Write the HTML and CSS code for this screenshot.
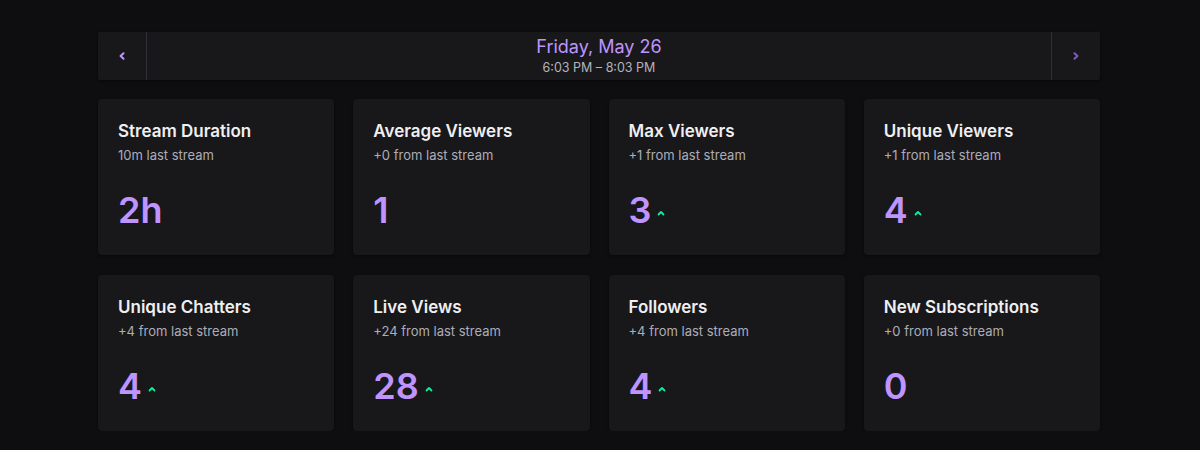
FILE: index.html
```html
<!DOCTYPE html>
<html lang="en">
<head>
<meta charset="utf-8">
<link rel="stylesheet" href="styles.css">
</head>
<body>
<div class="page">
  <div class="nav">
    <button class="nav-btn prev" aria-label="Previous">
      <svg width="8" height="8" viewBox="0 0 8 8"><path d="M5.5 1.2 L2.6 4 L5.5 6.8" fill="none" stroke="currentColor" stroke-width="2" stroke-linecap="round" stroke-linejoin="round"/></svg>
    </button>
    <div class="nav-center">
      <div class="nav-date">Friday, May 26</div>
      <div class="nav-time">6:03 PM – 8:03 PM</div>
    </div>
    <button class="nav-btn next" aria-label="Next">
      <svg width="8" height="8" viewBox="0 0 8 8"><path d="M2.5 1.2 L5.4 4 L2.5 6.8" fill="none" stroke="currentColor" stroke-width="2" stroke-linecap="round" stroke-linejoin="round"/></svg>
    </button>
  </div>

  <div class="grid">
    <div class="card">
      <div class="title">Stream Duration</div>
      <div class="sub">10m last stream</div>
      <div class="value">2h</div>
    </div>
    <div class="card">
      <div class="title">Average Viewers</div>
      <div class="sub">+0 from last stream</div>
      <div class="value">1</div>
    </div>
    <div class="card">
      <div class="title">Max Viewers</div>
      <div class="sub">+1 from last stream</div>
      <div class="value">3<svg class="up" width="8" height="6" viewBox="0 0 8 6"><path d="M1.5 4.5 L4 2 L6.5 4.5" fill="none" stroke="currentColor" stroke-width="1.8" stroke-linecap="round" stroke-linejoin="round"/></svg></div>
    </div>
    <div class="card">
      <div class="title">Unique Viewers</div>
      <div class="sub">+1 from last stream</div>
      <div class="value">4<svg class="up" width="8" height="6" viewBox="0 0 8 6"><path d="M1.5 4.5 L4 2 L6.5 4.5" fill="none" stroke="currentColor" stroke-width="1.8" stroke-linecap="round" stroke-linejoin="round"/></svg></div>
    </div>
    <div class="card">
      <div class="title">Unique Chatters</div>
      <div class="sub">+4 from last stream</div>
      <div class="value">4<svg class="up" width="8" height="6" viewBox="0 0 8 6"><path d="M1.5 4.5 L4 2 L6.5 4.5" fill="none" stroke="currentColor" stroke-width="1.8" stroke-linecap="round" stroke-linejoin="round"/></svg></div>
    </div>
    <div class="card">
      <div class="title">Live Views</div>
      <div class="sub">+24 from last stream</div>
      <div class="value">28<svg class="up" width="8" height="6" viewBox="0 0 8 6"><path d="M1.5 4.5 L4 2 L6.5 4.5" fill="none" stroke="currentColor" stroke-width="1.8" stroke-linecap="round" stroke-linejoin="round"/></svg></div>
    </div>
    <div class="card">
      <div class="title">Followers</div>
      <div class="sub">+4 from last stream</div>
      <div class="value">4<svg class="up" width="8" height="6" viewBox="0 0 8 6"><path d="M1.5 4.5 L4 2 L6.5 4.5" fill="none" stroke="currentColor" stroke-width="1.8" stroke-linecap="round" stroke-linejoin="round"/></svg></div>
    </div>
    <div class="card">
      <div class="title">New Subscriptions</div>
      <div class="sub">+0 from last stream</div>
      <div class="value">0</div>
    </div>
  </div>
</div>
</body>
</html>
```
FILE: styles.css
```css
* { box-sizing: border-box; }
html, body {
  margin: 0;
  background: #0e0e10;
  font-family: Inter, "Noto Sans", sans-serif;
  color: #efeff1;
}
.page {
  width: 1002px;
  margin: 32px 0 0 98px;
}
.nav {
  display: flex;
  height: 48px;
  background: #18181b;
  border-radius: 2px;
  box-shadow: 0 1px 3px rgba(0,0,0,0.5);
}
.nav-btn {
  width: 49px;
  flex: none;
  background: transparent;
  border: 0;
  padding: 0;
  display: flex;
  align-items: center;
  justify-content: center;
  color: #bf94ff;
}
.nav-btn.prev { border-right: 1px solid #2f2f35; }
.nav-btn.next { border-left: 1px solid #2f2f35; color: #7d5bbe; }
.nav-center {
  flex: 1;
  display: flex;
  flex-direction: column;
  align-items: center;
  justify-content: center;
}
.nav-date {
  color: #bf94ff;
  font-size: 18px;
  line-height: 22px;
}
.nav-time {
  margin-top: 2px;
  color: #b3b3bb;
  font-size: 12.5px;
  line-height: 16px;
}
.grid {
  margin-top: 19px;
  display: grid;
  grid-template-columns: repeat(4, 1fr);
  gap: 20px 19px;
}
.card {
  background: #18181b;
  border-radius: 4px;
  height: 156px;
  padding: 20px 20px 0 20px;
  box-shadow: 0 1px 3px rgba(0,0,0,0.5);
}
.title {
  font-size: 17px;
  font-weight: 600;
  line-height: 24px;
  color: #efeff1;
}
.sub {
  margin-top: 3px;
  font-size: 13px;
  line-height: 18px;
  color: #adadb8;
}
.value {
  margin-top: 25px;
  font-size: 36px;
  font-weight: 600;
  line-height: 42px;
  color: #bf94ff;
  display: flex;
  align-items: flex-end;
}
.up {
  color: #00f593;
  margin: 0 0 15px 6px;
}
```
